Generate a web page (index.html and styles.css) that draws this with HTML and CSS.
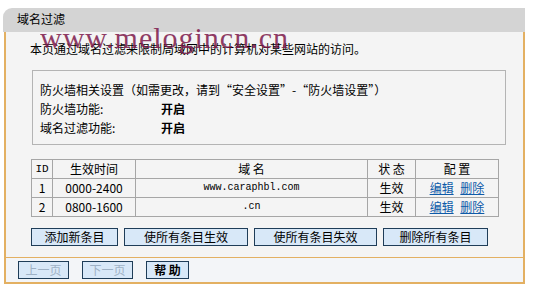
FILE: index.html
```html
<!DOCTYPE html>
<html lang="zh-CN">
  <head>
    <meta charset="UTF-8" />
    <meta name="viewport" content="width=device-width, initial-scale=1.0" />
    <title>域名过滤</title>
    <link rel="stylesheet" href="styles.css">
  </head>
  <body>
    <div class="panel">
      <div class="title">域名过滤</div>
      <div class="content">
        <p class="desc">本页通过域名过滤来限制局域网中的计算机对某些网站的访问。</p>

        <div class="info">
          <div class="info-row">防火墙相关设置（如需更改，请到“安全设置”-“防火墙设置”）</div>
          <div class="info-row"><span class="label">防火墙功能:</span><b>开启</b></div>
          <div class="info-row"><span class="label">域名过滤功能:</span><b>开启</b></div>
        </div>

        <table class="rules">
          <tr>
            <th class="c-id">ID</th>
            <th class="c-time">生效时间</th>
            <th class="c-domain">域 名</th>
            <th class="c-state">状 态</th>
            <th class="c-conf">配 置</th>
          </tr>
          <tr>
            <td>1</td>
            <td>0000-2400</td>
            <td class="mono">www.caraphbl.com</td>
            <td>生效</td>
            <td><a href="#">编辑</a> <a href="#">删除</a></td>
          </tr>
          <tr>
            <td>2</td>
            <td>0800-1600</td>
            <td class="mono">.cn</td>
            <td>生效</td>
            <td><a href="#">编辑</a> <a href="#">删除</a></td>
          </tr>
        </table>

        <div class="actions">
          <button class="btn w1">添加新条目</button>
          <button class="btn w2">使所有条目生效</button>
          <button class="btn w3">使所有条目失效</button>
          <button class="btn w4">删除所有条目</button>
        </div>
      </div>
      <div class="footer">
        <button class="btn page" disabled>上一页</button>
        <button class="btn page" disabled>下一页</button>
        <button class="btn help">帮 助</button>
      </div>

      <div class="watermark">www.melogincn.cn</div>
    </div>
  </body>
</html>
```

FILE: styles.css
```css
body {
  margin: 0;
  background-color: #fff;
  font-family: "Noto Sans CJK SC", "Liberation Sans", sans-serif;
  font-size: 12px;
  color: #000;
}
.panel {
  position: relative;
  width: 522px;
  margin: 8px 0 0 3px;
}
.title {
  height: 24px;
  line-height: 22px;
  padding-left: 14px;
  background-color: #d4d4d4;
  border-top-left-radius: 9px;
}
.content {
  margin-left: 1px;
  border-left: 2px solid #e3b062;
  border-right: 2px solid #e3b062;
  background-color: #f4f4f4;
  padding: 8px 0 11px 26px;
}
.desc {
  margin: 0 0 12px -2px;
  line-height: 18px;
}
.info {
  width: 465px;
  border: 1px solid #b4b4b4;
  padding: 9px 0 7px 7px;
}
.info-row {
  display: flex;
  line-height: 19px;
}
.label {
  width: 121px;
}
.rules {
  margin: 14px 0 0 -1px;
  width: 468px;
  border-collapse: collapse;
  table-layout: fixed;
}
.rules th,
.rules td {
  border: 1px solid #a6a6a6;
  height: 18px;
  padding: 0;
  text-align: center;
  font-weight: normal;
  line-height: 18px;
}
.c-id {
  width: 20px;
  font-family: "Liberation Mono", monospace;
  font-size: 11px;
}
.c-time { width: 82px; }
.c-domain { width: 231px; }
.c-state { width: 47px; }
.mono {
  font-family: "Liberation Mono", monospace;
  font-size: 10px;
}
.rules a {
  color: #0d5aa8;
  margin: 0 2px;
}
.actions {
  display: flex;
  gap: 6px;
  margin: 11px 0 0 -1px;
}
.btn {
  height: 18px;
  padding: 0;
  background-color: #d8e8f8;
  border: 1px solid #1f3d58;
  font-family: "Noto Sans CJK SC", sans-serif;
  font-size: 12px;
  line-height: 16px;
  color: #000;
}
.w1 { width: 87px; }
.w2 { width: 124px; }
.w3 { width: 123px; }
.w4 { width: 105px; }
.footer {
  display: flex;
  gap: 13px;
  margin-left: 1px;
  height: 21px;
  padding: 3px 0 0 12px;
  border: 2px solid #e3b062;
  border-top: 1px solid #e3b062;
  background-color: #f3f5f8;
}
.page {
  width: 51px;
  color: #9fb2c6;
}
.help {
  width: 43px;
  font-weight: bold;
}
.watermark {
  position: absolute;
  left: 37px;
  top: 13px;
  font-family: "Liberation Serif", serif;
  font-size: 30px;
  letter-spacing: 1px;
  color: #7e1a4c;
  opacity: 0.85;
  pointer-events: none;
}
```
